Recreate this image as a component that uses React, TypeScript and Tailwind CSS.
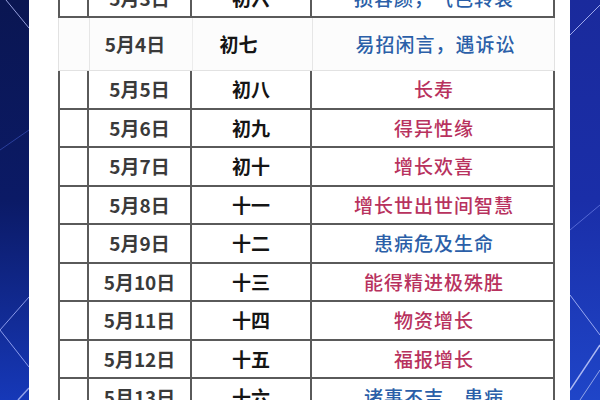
import React from "react";

type Row = {
    date: string;
    lunar: string;
    meaning: string;
    tone: "red" | "blue";
};

const ROWS: Row[] = [
    { date: "5月5日", lunar: "初八", meaning: "长寿", tone: "red" },
    { date: "5月6日", lunar: "初九", meaning: "得异性缘", tone: "red" },
    { date: "5月7日", lunar: "初十", meaning: "增长欢喜", tone: "red" },
    { date: "5月8日", lunar: "十一", meaning: "增长世出世间智慧", tone: "red" },
    { date: "5月9日", lunar: "十二", meaning: "患病危及生命", tone: "blue" },
    { date: "5月10日", lunar: "十三", meaning: "能得精进极殊胜", tone: "red" },
    { date: "5月11日", lunar: "十四", meaning: "物资增长", tone: "red" },
    { date: "5月12日", lunar: "十五", meaning: "福报增长", tone: "red" },
    { date: "5月13日", lunar: "十六", meaning: "诸事不吉，患病", tone: "blue" },
];

const font = { fontFamily: '"Noto Sans CJK SC", "Noto Sans", sans-serif' };

function SideLeft() {
    return (
        <div className="relative w-[29px] shrink-0 overflow-hidden bg-gradient-to-b from-[#0a1652] via-[#0b1a66] to-[#1638b8]">
            <svg className="absolute inset-0" width="29" height="400" viewBox="0 0 29 400">
                <path d="M6 0 L29 28" stroke="#b9c2ff" strokeWidth="1" opacity="0.8" />
                <path d="M0 150 L29 130" stroke="#4a64d8" strokeWidth="1" opacity="0.5" />
                <path d="M29 297 L0 330 L29 367" stroke="#a9b6ff" strokeWidth="1" fill="none" opacity="0.8" />
                <path d="M18 400 L29 388" stroke="#c8d0ff" strokeWidth="1.5" opacity="0.7" />
            </svg>
        </div>
    );
}

function SideRight() {
    return (
        <div className="relative w-[30px] shrink-0 overflow-hidden bg-gradient-to-b from-[#1a2a9c] via-[#1a2ea8] to-[#1f45c8]">
            <svg className="absolute inset-0" width="30" height="400" viewBox="0 0 30 400">
                <path d="M0 35 L30 5" stroke="#c0c8ff" strokeWidth="1" opacity="0.8" />
                <path d="M0 230 L30 205" stroke="#8fa0ff" strokeWidth="1" opacity="0.5" />
                <path d="M0 295 L30 335" stroke="#b9c4ff" strokeWidth="1" opacity="0.8" />
                <path d="M0 390 L30 345" stroke="#d2d8ff" strokeWidth="1.5" opacity="0.8" />
                <path d="M10 400 L30 370" stroke="#e0e6ff" strokeWidth="1" opacity="0.6" />
            </svg>
        </div>
    );
}

function TableRow({ row }: { row: Row }) {
    const color = row.tone === "red" ? "text-[#b8325e]" : "text-[#2b5fa8]";
    return (
        <div className="grid h-[38.5px] grid-cols-[29px_103px_120px_244px] border-b-2 border-[#5a5a5a]">
            <div className="border-r-2 border-[#5a5a5a]" />
            <div className="flex items-center justify-center border-r-2 border-[#5a5a5a] text-[19px] font-bold text-[#3a3a3a]">
                {row.date}
            </div>
            <div className="flex items-center justify-center border-r-2 border-[#5a5a5a] text-[19px] font-bold text-[#151515]">
                {row.lunar}
            </div>
            <div className={`flex items-center justify-center text-[19px] font-medium tracking-[1px] ${color}`}>
                {row.meaning}
            </div>
        </div>
    );
}

export default function App() {
    return (
        <div className="flex h-[400px] w-[600px] overflow-hidden bg-white" style={font}>
            <SideLeft />
            <div className="flex-1 overflow-hidden pl-[29px]">
                <div className="-mt-[20px] w-[497px] border-l-2 border-r-2 border-[#5a5a5a]">
                    <div className="grid h-[38px] grid-cols-[29px_103px_120px_244px] border-b-2 border-[#5a5a5a]">
                        <div className="border-r-2 border-[#5a5a5a]" />
                        <div className="flex items-center justify-center border-r-2 border-[#5a5a5a] text-[19px] font-bold text-[#3a3a3a]">
                            5月3日
                        </div>
                        <div className="flex items-center justify-center border-r-2 border-[#5a5a5a] text-[19px] font-bold text-[#151515]">
                            初六
                        </div>
                        <div className="flex items-center justify-center text-[19px] font-medium tracking-[1px] text-[#2b5fa8]">
                            损容颜，气色转衰
                        </div>
                    </div>
                    <div className="-mx-[2px] grid h-[53px] grid-cols-[31px_103px_120px_245px] border-b border-l border-r border-[#e2e2e2] bg-[#fcfcfc]">
                        <div className="border-r border-[#e6e6e6]" />
                        <div className="flex items-center justify-center border-r border-[#ececec] pr-[12px] text-[19px] font-bold text-[#3a3a3a]">
                            5月4日
                        </div>
                        <div className="flex items-center justify-center border-r border-[#e6e6e6] pr-[28px] text-[19px] font-bold text-[#151515]">
                            初七
                        </div>
                        <div className="flex items-center justify-center text-[19px] font-medium tracking-[1px] text-[#2b5fa8]">
                            易招闲言，遇诉讼
                        </div>
                    </div>
                    {ROWS.map((row) => (
                        <TableRow key={row.date} row={row} />
                    ))}
                </div>
            </div>
            <SideRight />
        </div>
    );
}
